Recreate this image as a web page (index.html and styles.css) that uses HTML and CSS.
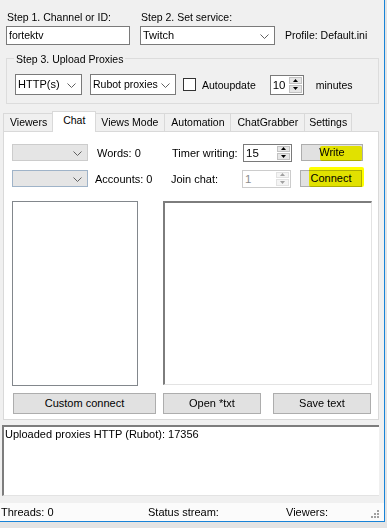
FILE: index.html
```html
<!doctype html>
<html>
<head>
    <title>Viewer Bot</title>
    <link rel="stylesheet" href="styles.css">
</head>
<body>

<div class="window">

    <div class="top">
        <div class="field channel">
            <div class="lbl">Step 1. Channel or ID:</div>
            <div class="textbox">fortektv</div>
        </div>
        <div class="field service">
            <div class="lbl">Step 2. Set service:</div>
            <div class="combo wide">Twitch
                <svg class="chev" width="9" height="5"><path d="M0.5 0.5 L4.5 4.5 L8.5 0.5" stroke="#606060" fill="none"/></svg>
            </div>
        </div>
        <div class="profile">Profile: Default.ini</div>
    </div>

    <div class="group">
        <span class="legend">Step 3. Upload Proxies</span>
        <div class="group_row">
            <div class="combo proto">HTTP(s)
                <svg class="chev" width="9" height="5"><path d="M0.5 0.5 L4.5 4.5 L8.5 0.5" stroke="#606060" fill="none"/></svg>
            </div>
            <div class="combo source"><span class="clip">Rubot proxies</span>
                <svg class="chev" width="9" height="5"><path d="M0.5 0.5 L4.5 4.5 L8.5 0.5" stroke="#606060" fill="none"/></svg>
            </div>
            <span class="check"></span>
            <span class="check_lbl">Autoupdate</span>
            <div class="numeric small">10
                <div class="spin">
                    <span class="sb"><svg width="5" height="3"><path d="M0 3 L2.5 0 L5 3Z" fill="#000"/></svg></span>
                    <span class="sb"><svg width="5" height="3"><path d="M0 0 L2.5 3 L5 0Z" fill="#000"/></svg></span>
                </div>
            </div>
            <span class="minutes">minutes</span>
        </div>
    </div>

    <div class="tabs">
        <span class="tab">Viewers</span>
        <span class="tab active">Chat</span>
        <span class="tab">Views Mode</span>
        <span class="tab">Automation</span>
        <span class="tab">ChatGrabber</span>
        <span class="tab">Settings</span>
    </div>

    <div class="panel">
        <div class="prow">
            <div class="combo dis">
                <svg class="chev" width="9" height="5"><path d="M0.5 0.5 L4.5 4.5 L8.5 0.5" stroke="#606060" fill="none"/></svg>
            </div>
            <span class="plabel">Words: 0</span>
            <span class="tlabel">Timer writing:</span>
            <div class="numeric mid">15
                <div class="spin">
                    <span class="sb"><svg width="5" height="3"><path d="M0 3 L2.5 0 L5 3Z" fill="#000"/></svg></span>
                    <span class="sb"><svg width="5" height="3"><path d="M0 0 L2.5 3 L5 0Z" fill="#000"/></svg></span>
                </div>
            </div>
            <div class="btn side">Write<span class="mark mark_write"></span></div>
        </div>
        <div class="prow">
            <div class="combo dis focus">
                <svg class="chev" width="9" height="5"><path d="M0.5 0.5 L4.5 4.5 L8.5 0.5" stroke="#606060" fill="none"/></svg>
            </div>
            <span class="plabel acc">Accounts: 0</span>
            <span class="tlabel join">Join chat:</span>
            <div class="numeric mid off">1
                <div class="spin">
                    <span class="sb"><svg width="5" height="3"><path d="M0 3 L2.5 0 L5 3Z" fill="#a0a0a0"/></svg></span>
                    <span class="sb"><svg width="5" height="3"><path d="M0 0 L2.5 3 L5 0Z" fill="#a0a0a0"/></svg></span>
                </div>
            </div>
            <div class="btn side">Connect<span class="mark mark_connect"></span></div>
        </div>

        <div class="lists">
            <div class="listbox"></div>
            <div class="chatbox"></div>
        </div>

        <div class="brow">
            <div class="btn custom">Custom connect</div>
            <div class="btn open">Open *txt</div>
            <div class="btn save">Save text</div>
        </div>
    </div>

    <div class="log">Uploaded proxies HTTP (Rubot): 17356</div>

    <div class="status">
        <div class="status_in">
            <span class="st threads">Threads: 0</span>
            <span class="st stream">Status stream:</span>
            <span class="st viewers">Viewers:</span>
            <svg class="grip" width="9" height="9">
                <rect x="6" y="0" width="2" height="2" fill="#a0a0a0"/>
                <rect x="3" y="3" width="2" height="2" fill="#a0a0a0"/>
                <rect x="6" y="3" width="2" height="2" fill="#a0a0a0"/>
                <rect x="0" y="6" width="2" height="2" fill="#a0a0a0"/>
                <rect x="3" y="6" width="2" height="2" fill="#a0a0a0"/>
                <rect x="6" y="6" width="2" height="2" fill="#a0a0a0"/>
            </svg>
        </div>
    </div>

</div>

</body>
</html>
```

FILE: styles.css
```css
body {
    margin: 0;
    background: #e4e4e4;
    font-family: "Liberation Sans", Arial, sans-serif;
    font-size: 10.5px;
    color: #000;
}

.window {
    width: 384px;
    height: 521px;
    background: #f0f0f0;
    border-right: 1px solid #1883d7;
    border-bottom: 1px solid #1883d7;
    display: flex;
    flex-direction: column;
}

/* step 1 / step 2 */
.top {
    display: flex;
    align-items: flex-end;
    padding: 10px 0 0 6px;
}
.lbl {
    line-height: 14px;
    margin: 0 0 2px 1px;
}
.channel { width: 124px; }
.service { margin-left: 10px; }
.textbox {
    box-sizing: border-box;
    height: 19px;
    background: #fff;
    border: 1px solid #7a7a7a;
    line-height: 17px;
    padding-left: 2px;
}
.profile {
    margin-left: 10px;
    line-height: 19px;
}

.combo {
    box-sizing: border-box;
    position: relative;
    background: #fff;
    border: 1px solid #7a7a7a;
    padding-left: 2px;
    white-space: nowrap;
    overflow: hidden;
}
.combo .chev {
    position: absolute;
    right: 5px;
    top: 50%;
    margin-top: -2px;
}
.combo .clip {
    display: block;
    width: 66px;
    overflow: hidden;
}
.combo.wide {
    width: 135px;
    height: 19px;
    line-height: 17px;
    font-size: 11px;
}

/* step 3 */
.group {
    margin: 13px 5px 0 6px;
    height: 46px;
    box-sizing: border-box;
    border: 1px solid #dcdcdc;
}
.legend {
    display: inline-block;
    margin: -7px 0 0 7px;
    padding: 0 2px;
    line-height: 14px;
    background: #f0f0f0;
    vertical-align: top;
}
.group_row {
    display: flex;
    align-items: center;
    margin: 3px 0 0 8px;
}
.combo.proto,
.combo.source {
    height: 21px;
    line-height: 19px;
    font-size: 11px;
}
.combo.proto { width: 67px; }
.combo.source { width: 86px; margin-left: 8px; font-size: 10.5px; }
.check {
    width: 13px;
    height: 13px;
    box-sizing: border-box;
    border: 1px solid #333;
    background: #fff;
    margin-left: 7px;
}
.check_lbl { margin-left: 6px; }
.minutes { margin-left: 12px; }

.numeric {
    box-sizing: border-box;
    position: relative;
    background: #fff;
    border: 1px solid #7a7a7a;
    padding-left: 2px;
    display: flex;
    justify-content: space-between;
    font-size: 11.5px;
}
.numeric.small {
    width: 34px;
    height: 20px;
    line-height: 18px;
    margin-left: 14px;
}
.numeric.mid {
    width: 49px;
    height: 18px;
    line-height: 16px;
}
.numeric.off {
    border-color: #cccccc;
    color: #8d8d8d;
}
.spin {
    display: flex;
    flex-direction: column;
    width: 13px;
    padding: 1px;
    gap: 1px;
}
.sb {
    flex: 1;
    background: #e6e6e6;
    border: 1px solid #c2c2c2;
    display: flex;
    align-items: center;
    justify-content: center;
}
.off .sb {
    background: #f4f4f4;
    border-color: #e2e2e2;
}

/* tabs */
.tabs {
    display: flex;
    align-items: flex-end;
    margin: 7px 0 0 3px;
    height: 20px;
}
.tab {
    box-sizing: border-box;
    height: 18px;
    line-height: 17px;
    padding: 0 6px;
    background: #f0f0f0;
    border: 1px solid #d9d9d9;
    border-bottom: none;
    margin-left: -1px;
}
.tab:first-child { margin-left: 0; }
.tab:last-child { padding: 0 4px; }
.tab.active {
    height: 21px;
    line-height: 17px;
    padding: 0 10px 0 10px;
    background: #fff;
    margin: 0 -1px -1px -2px;
    position: relative;
    z-index: 1;
}

.panel {
    margin: 0 5px 0 3px;
    background: #fff;
    border: 1px solid #d9d9d9;
    padding: 11px 0 5px 8px;
}
.prow {
    display: flex;
    align-items: center;
    height: 19px;
    margin-bottom: 7px;
}
.prow + .prow { margin-bottom: 0; }
.combo.dis {
    width: 76px;
    height: 17px;
    background: #e5e5e5;
    border-color: #cccccc;
}
.combo.dis.focus { border-color: #9fb3c8; }
.plabel {
    margin-left: 9px;
    width: 75px;
    font-size: 11px;
}
.plabel.acc { margin-left: 7px; width: 76px; }
.tlabel {
    width: 71px;
    font-size: 11px;
}

.btn {
    box-sizing: border-box;
    position: relative;
    background: #e1e1e1;
    border: 1px solid #adadad;
    text-align: center;
    font-size: 11px;
}
.btn.side {
    width: 62px;
    height: 17px;
    line-height: 15px;
    margin-left: 9px;
}
.mark {
    position: absolute;
    background: #ffff00;
    mix-blend-mode: multiply;
    border-radius: 2px;
}
.mark_write {
    left: 18px;
    top: 1px;
    width: 42px;
    height: 15px;
}
.mark_connect {
    left: 8px;
    top: -4px;
    width: 55px;
    height: 20px;
}

.lists {
    display: flex;
    margin-top: 13px;
}
.listbox {
    width: 126px;
    height: 185px;
    box-sizing: border-box;
    border: 1px solid #82878c;
}
.chatbox {
    width: 209px;
    height: 184px;
    box-sizing: border-box;
    margin-left: 25px;
    border-top: 2px solid #7d7d7d;
    border-left: 2px solid #7d7d7d;
    border-right: 1px solid #e3e3e3;
    border-bottom: 1px solid #e3e3e3;
}

.brow {
    display: flex;
    margin-top: 7px;
}
.brow .btn {
    height: 21px;
    line-height: 19px;
}
.btn.custom { width: 143px; margin-left: 1px; }
.btn.open { width: 98px; margin-left: 7px; }
.btn.save { width: 98px; margin-left: 12px; }

.log {
    margin: 5px 0 0 2px;
    width: 377px;
    height: 71px;
    box-sizing: border-box;
    background: #fff;
    border-top: 2px solid #7d7d7d;
    border-left: 2px solid #7d7d7d;
    border-bottom: 1px solid #e3e3e3;
    padding: 1px 0 0 1px;
    line-height: 13px;
    font-size: 11px;
}

.status {
    height: 25px;
    padding-top: 7px;
    box-sizing: border-box;
}
.status_in {
    display: flex;
    align-items: center;
    height: 18px;
    background: #fbfbfb;
    font-size: 11px;
}
.st.threads { width: 147px; padding-left: 1px; }
.st.stream { width: 138px; }
.st.viewers { flex: 1; }
.grip {
    margin: 4px 4px 0 0;
}
```
